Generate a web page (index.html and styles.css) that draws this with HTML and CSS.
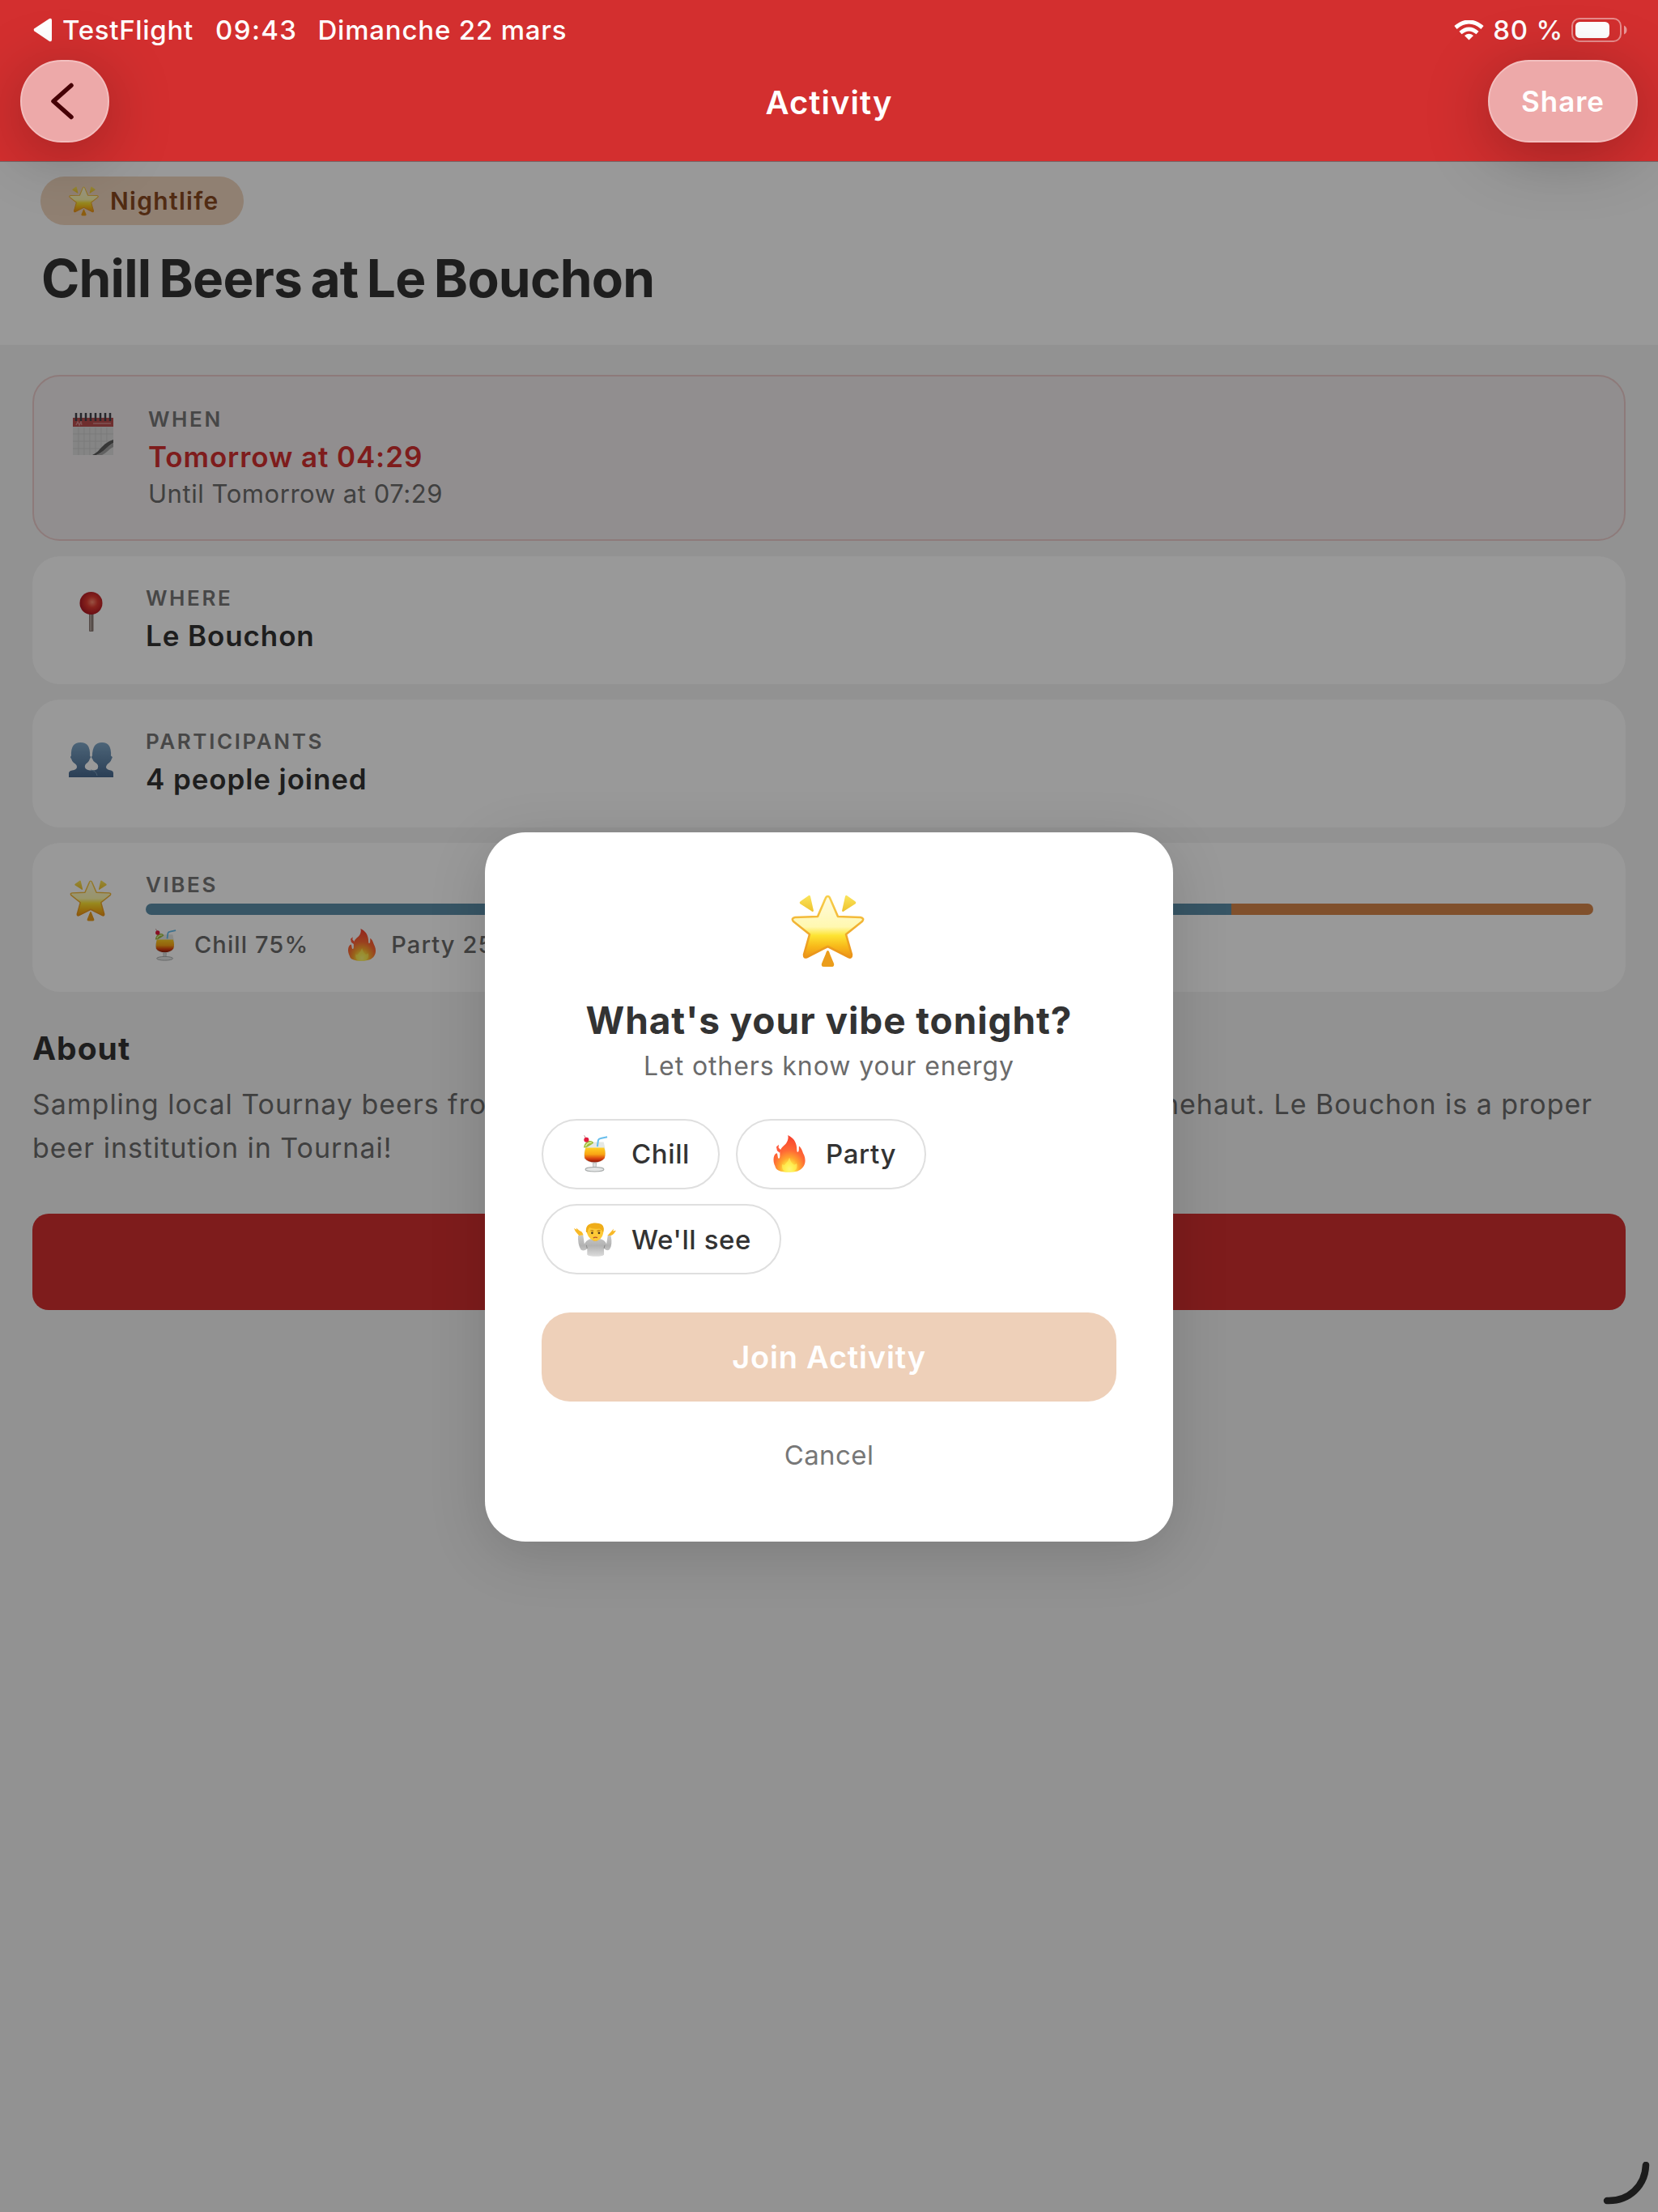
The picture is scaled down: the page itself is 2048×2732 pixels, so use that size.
FILE: index.html
```html
<!DOCTYPE html>
<html lang="en">
<head>
    <meta charset="UTF-8">
    <meta name="viewport" content="width=device-width, initial-scale=1.0">
    <title>Activity</title>
    <link rel="stylesheet" href="styles.css">
</head>
<body>
    <!-- Shared icons -->
    <svg class="icon-defs" width="0" height="0">
        <defs>
            <linearGradient id="starFill" x1="0" y1="0" x2="0" y2="1">
                <stop offset="0" stop-color="#fffbe0"/>
                <stop offset="0.5" stop-color="#fff8b0"/>
                <stop offset="0.64" stop-color="#fde433"/>
                <stop offset="0.82" stop-color="#f8b91a"/>
                <stop offset="1" stop-color="#ec9217"/>
            </linearGradient>
            <linearGradient id="starEdge" x1="0" y1="0" x2="0" y2="1">
                <stop offset="0" stop-color="#f8cf4c"/>
                <stop offset="1" stop-color="#ea9318"/>
            </linearGradient>
            <linearGradient id="rayFill" x1="0" y1="0" x2="0" y2="1">
                <stop offset="0" stop-color="#fbe55c"/>
                <stop offset="1" stop-color="#eec22e"/>
            </linearGradient>
            <radialGradient id="fireFill" cx="0.5" cy="0.92" r="0.85">
                <stop offset="0" stop-color="#fffb9a"/>
                <stop offset="0.17" stop-color="#ffe840"/>
                <stop offset="0.37" stop-color="#ffa42e"/>
                <stop offset="0.6" stop-color="#ff6a35"/>
                <stop offset="1" stop-color="#f8452f"/>
            </radialGradient>
            <linearGradient id="drinkFill" x1="0" y1="0" x2="0" y2="1">
                <stop offset="0" stop-color="#ffcf24"/>
                <stop offset="0.45" stop-color="#f9a514"/>
                <stop offset="0.75" stop-color="#d9420f"/>
                <stop offset="1" stop-color="#8c1708"/>
            </linearGradient>
            <linearGradient id="shirtFill" x1="0" y1="0" x2="0" y2="1">
                <stop offset="0" stop-color="#c9c9c9"/>
                <stop offset="0.5" stop-color="#b2b2b2"/>
                <stop offset="1" stop-color="#dcdcdc"/>
            </linearGradient>
            <linearGradient id="peopleFill" x1="0" y1="0" x2="0" y2="1">
                <stop offset="0" stop-color="#7fa7c8"/>
                <stop offset="1" stop-color="#48698f"/>
            </linearGradient>
            <radialGradient id="pinFill" cx="0.55" cy="0.45" r="0.6">
                <stop offset="0" stop-color="#ff8a70"/>
                <stop offset="0.4" stop-color="#e03a30"/>
                <stop offset="1" stop-color="#a81220"/>
            </radialGradient>
        </defs>
        <symbol id="star" viewBox="0 0 91 90">
            <path d="M24 2L28 20Q27 22 25 20L11 11Q10 9 12 8L22 1Q23 0 24 2Z" fill="url(#rayFill)"/>
            <path d="M67 2L63 20Q64 22 66 20L80 11Q81 9 79 8L69 1Q68 0 67 2Z" fill="url(#rayFill)"/>
            <path d="M45.5 2Q47.500 2 48.500 5L58 27L86 28Q91 29 88 33L68 49L75 74Q75 79 71 77L45.500 64L20 77Q16 79 16 74L23 49L3 33Q0 29 5 28L33 27L42.500 5Q43.500 2 45.500 2Z" fill="url(#starFill)" stroke="url(#starEdge)" stroke-width="2.600" stroke-linejoin="round"/>
            <path d="M45.500 69Q47 69 48 73L53 85Q54 89 50 89H41Q37 89 38 85L43 73Q44 69 45.500 69Z" fill="#eb9d1b"/>
        </symbol>
        <symbol id="fire" viewBox="0 0 117 136">
            <path d="M53 0C76 10 86 30 86 53C86 64 91 64 93 56C94 48 93 43 94 40C106 50 106 62 112 72C122 95 115 120 91 130C80 136 38 138 20 129C8 125 9 117 4 108C-3 88 2 70 12 66C16 66 15 77 18 84C25 88 24 78 24 69C24 47 34 43 46 31C54 20 56 9 53 0Z" fill="url(#fireFill)"/>
            <path d="M11 43L20 35L19 46L27 54L24 65L14 57Z" fill="#ff5a3c"/>
            <path d="M58 136C36 136 29 121 33 106Q40 113 45 104Q55 95 59 82Q64 100 72 106Q79 111 85 103C90 119 83 136 58 136Z" fill="#fff35e" opacity="0.6"/>
        </symbol>
        <symbol id="cocktail" viewBox="0 0 93 136">
            <path d="M19 25H78C83 46 87 63 82 83C75 97 59 101 45 101C28 101 14 96 7 84C2 63 14 46 19 25Z" fill="#e5e8e4"/>
            <path d="M12 46H80C85 61 85 73 81 84C73 94 60 99 45 99C29 99 16 94 9 84C6 70 9 57 12 46Z" fill="url(#drinkFill)"/>
            <path d="M55 42L58 19Q60 13 67 12L91 7" fill="none" stroke="#66bdec" stroke-width="6"/>
            <path d="M5 46Q7 26 24 21Q38 19 41 29Q31 37 15 45Z" fill="#9dbd3b"/>
            <path d="M12 41Q17 27 34 27" fill="none" stroke="#e5eeaa" stroke-width="4"/>
            <path d="M7 1L14 13" stroke="#9c4a44" stroke-width="2"/>
            <circle cx="15" cy="17" r="9" fill="#e31c3d"/>
            <path d="M39 101H51L50 119H40Z" fill="#dddfdf" stroke="#9fa3a3" stroke-width="2"/>
            <ellipse cx="45" cy="125" rx="34" ry="8" fill="#e4e6e6" stroke="#a4a8a8" stroke-width="3"/>
        </symbol>
        <symbol id="shrug" viewBox="0 0 153 122">
            <path d="M15 46L33 45L38 77Q43 65 58 59H97Q113 63 118 77L123 45L134 46Q141 82 129 97Q120 104 109 93V116Q103 122 80 122Q55 122 48 116V94Q37 105 25 98Q13 77 15 46Z" fill="url(#shirtFill)"/>
            <path d="M48 93L45 81M109 93L112 81" stroke="#8b8b8b" stroke-width="3"/>
            <path d="M18 46L5 31L0 20L10 25L8 18L20 29Q31 32 34 45Z" fill="#f8b928"/>
            <path d="M122 46L136 31L144 21L142 30L153 28L146 38Q141 44 134 46Z" fill="#f8b928"/>
            <path d="M65 51H90V60Q78 73 65 60Z" fill="#e59d17"/>
            <path d="M46 20Q46 2 77 2Q107 2 107 22Q108 48 96 58Q78 74 60 58Q45 46 46 20Z" fill="#fdc937"/>
            <path d="M44 34Q40 4 72 1Q106-1 108 19Q109 28 106 35Q101 24 93 21Q69 25 56 17Q50 24 49 36Z" fill="#efad1a"/>
            <path d="M60 29Q66 26 71 30M84 30Q91 26 96 29" stroke="#a2680f" stroke-width="3" fill="none"/>
            <circle cx="66" cy="37" r="4" fill="#49351c"/>
            <circle cx="91" cy="37" r="4" fill="#49351c"/>
            <path d="M70 55Q77 51 85 54" stroke="#b7502b" stroke-width="4" fill="none"/>
        </symbol>
    </svg>

    <header class="header">
        <div class="status-bar">
            <div class="status-left">
                <svg width="24" height="32" viewBox="0 0 24 32"><path d="M1 14.500Q0 16 1.500 17.500L20 30Q23 31 23 28V4Q23 1 20 2Z" fill="#fff"/></svg>
                <span class="status-app">TestFlight</span>
                <span class="status-time">09:43</span>
                <span class="status-date">Dimanche 22 mars</span>
            </div>
            <div class="status-right">
                <svg width="37" height="25" viewBox="0 0 37 25">
                    <path d="M2 9Q18.500-5 35 9" fill="none" stroke="#fff" stroke-width="5"/>
                    <path d="M8 15.500Q18.500 6.500 29 15.500" fill="none" stroke="#fff" stroke-width="4.800"/>
                    <path d="M13 19Q18.500 14.500 24 19L18.500 24.500Z" fill="#fff"/>
                </svg>
                <span class="battery-text">80 %</span>
                <svg width="69" height="30" viewBox="0 0 69 30">
                    <rect x="1" y="1" width="60" height="28" rx="9" fill="none" stroke="#fff" stroke-opacity="0.45" stroke-width="2"/>
                    <rect x="5" y="5" width="42" height="20" rx="5.500" fill="#fff"/>
                    <path d="M65 9.500Q68.500 11 68.500 15Q68.500 19 65 20.500Z" fill="#fff" fill-opacity="0.5"/>
                </svg>
            </div>
        </div>
        <div class="nav-bar">
            <button class="glass-button back-button" aria-label="Back">
                <svg width="30" height="46" viewBox="0 0 30 46"><path d="M26 3.500L4 23L26 42.500" fill="none" stroke="#450005" stroke-width="5.500" stroke-linecap="round" stroke-linejoin="round"/></svg>
            </button>
            <div class="nav-title">Activity</div>
            <button class="glass-button share-button">Share</button>
        </div>
    </header>

    <main class="page">
        <section class="hero">
            <div class="category">
                <svg width="37" height="37"><use href="#star"/></svg>
                <span>Nightlife</span>
            </div>
            <h1 class="title">Chill Beers at Le Bouchon</h1>
        </section>

        <section class="details">
            <div class="card card-when">
                <svg class="card-icon" viewBox="0 0 68 68">
                    <path d="M7 14H57V60H7Z" fill="#dedede"/>
                    <path d="M14 26V60M21 26V60M28 26V60M35 26V60M42 26V60M49 26V60M7 34H57M7 43H57M7 52H57" stroke="#cbcbcb" stroke-width="1"/>
                    <path d="M7 14H57V25H7Z" fill="#b94d4d"/>
                    <path d="M11 23L13 19L15 23L17 19L18 23M32 21H54" stroke="#d58c8c" stroke-width="1.500" fill="none"/>
                    <path d="M11 8V18M17 8V18M23 8V18M29 8V18M35 8V18M41 8V18M47 8V18M53 8V18" stroke="#43434b" stroke-width="2.500"/>
                    <path d="M34 58C44 54 45 46 57 42V60H31Z" fill="#dedede"/>
                    <path d="M31 60C42 55 42 46 57 41V45C49 49 47 56 36 60Z" fill="#5c5c5c"/>
                    <path d="M36 60C44 57 49 50 57 45V50C51 53 48 58 43 60Z" fill="#a2a2a2"/>
                </svg>
                <div class="card-body">
                    <div class="card-label">WHEN</div>
                    <div class="card-value value-when">Tomorrow at 04:29</div>
                    <div class="card-sub">Until Tomorrow at 07:29</div>
                </div>
            </div>

            <div class="card">
                <svg class="card-icon" viewBox="0 0 68 68">
                    <rect x="30" y="30" width="5.500" height="27" rx="1" fill="#8d7d77"/>
                    <path d="M32 30V56" stroke="#bcaea6" stroke-width="1.500"/>
                    <circle cx="32.500" cy="22" r="14" fill="url(#pinFill)"/>
                </svg>
                <div class="card-body">
                    <div class="card-label">WHERE</div>
                    <div class="card-value">Le Bouchon</div>
                </div>
            </div>

            <div class="card">
                <svg class="card-icon" viewBox="0 0 68 68">
                    <path d="M5 60V54Q5 51 9 50Q15 49 15 45Q15 42 11 39Q9 37 8 33Q6 31 8 29Q7 10 19.500 10Q32 10 31 29Q33 31 31 33Q30 37 28 39Q24 42 25 46Q26 49 31 50H34Q41 50 41 46Q42 42 38 39Q35 37 34 33Q32 31 34 29Q34 10 46 10Q58 10 57 29Q60 31 58 33Q57 37 55 39Q51 42 51 46Q52 49 57 50Q60 51 60 54V60Z" fill="url(#peopleFill)" transform="translate(0 8.500) scale(1 0.86)"/>
                    <path d="M32 51Q39 52 40 58" fill="none" stroke="#7ea0bf" stroke-width="1"/>
                </svg>
                <div class="card-body">
                    <div class="card-label">PARTICIPANTS</div>
                    <div class="card-value">4 people joined</div>
                </div>
            </div>

            <div class="card">
                <svg class="card-icon" viewBox="0 0 68 68">
                    <use href="#star" x="6" y="10" width="52" height="51"/>
                </svg>
                <div class="card-body">
                    <div class="card-label label-vibes">VIBES</div>
                    <div class="vibe-bar">
                        <div class="vibe-chill" style="width: 75%"></div>
                        <div class="vibe-party" style="width: 25%"></div>
                    </div>
                    <div class="vibe-legend">
                        <div class="legend-item">
                            <svg width="48" height="40"><use href="#cocktail"/></svg>
                            <span>Chill 75%</span>
                        </div>
                        <div class="legend-item">
                            <svg width="48" height="40"><use href="#fire"/></svg>
                            <span>Party 25%</span>
                        </div>
                    </div>
                </div>
            </div>
        </section>

        <section class="about">
            <h2 class="about-title">About</h2>
            <div class="about-text">
                <div class="about-line">
                    <span>Sampling local Tournay beers from Cazeau</span>
                    <span>and Brunehaut. Le Bouchon is a proper</span>
                </div>
                <div>beer institution in Tournai!</div>
            </div>
            <button class="page-button" aria-label="Join"></button>
        </section>
    </main>

    <div class="overlay">
        <div class="modal">
            <svg class="modal-icon" width="91" height="90"><use href="#star"/></svg>
            <h2 class="modal-title">What's your vibe tonight?</h2>
            <div class="modal-subtitle">Let others know your energy</div>
            <div class="chips">
                <button class="chip"><svg width="52" height="46"><use href="#cocktail"/></svg><span>Chill</span></button>
                <button class="chip"><svg width="52" height="46"><use href="#fire"/></svg><span>Party</span></button>
                <button class="chip"><svg width="52" height="42"><use href="#shrug"/></svg><span>We'll see</span></button>
            </div>
            <button class="join-button">Join Activity</button>
            <button class="cancel-button">Cancel</button>
        </div>
    </div>

    <svg class="corner" width="60" height="56" viewBox="0 0 60 56"><path d="M5 48C32 49 52 30 53 4" fill="none" stroke="#1c1c1c" stroke-width="8.500" stroke-linecap="round"/></svg>
</body>
</html>
```

FILE: styles.css
```css
* {
    box-sizing: border-box;
}

body, html {
    margin: 0;
    padding: 0;
    height: 100%;
    width: 100%;
    font-family: Inter, "Liberation Sans", sans-serif;
    background-color: #f4f4f4;
    overflow: hidden;
}

button {
    border: none;
    padding: 0;
    font-family: inherit;
    cursor: pointer;
}

.icon-defs {
    position: absolute;
}

/* Header */
.header {
    position: relative;
    z-index: 2;
    height: 199px;
    background-color: #d32f2f;
    color: white;
    box-shadow: 0 1px 0 #75696a;
}

.status-bar {
    display: flex;
    justify-content: space-between;
    height: 74px;
    padding: 0 38px 0 41px;
    font-size: 33px;
    font-weight: 500;
    line-height: 74px;
    white-space: nowrap;
}

.status-left, .status-right {
    display: flex;
    align-items: center;
}

.status-app {
    margin-left: 12px;
    letter-spacing: 0.7px;
}

.status-time {
    margin-left: 27px;
    letter-spacing: 1.4px;
}

.status-date {
    margin-left: 25px;
    letter-spacing: 0.8px;
}

.battery-text {
    margin: 0 10px 0 11px;
    letter-spacing: 0.8px;
}

.nav-bar {
    display: grid;
    grid-template-columns: 1fr auto 1fr;
    align-items: center;
    height: 102px;
    padding: 0 25px;
}

.glass-button {
    height: 102px;
    border-radius: 51px;
    background-color: #eda9a9;
    border: 2px solid #f3bfbf;
    box-shadow: 0 14px 80px rgba(0, 0, 0, 0.27);
}

.back-button {
    display: flex;
    align-items: center;
    justify-content: center;
    width: 110px;
    padding-right: 6px;
}

.share-button {
    justify-self: end;
    width: 185px;
    font-size: 35px;
    font-weight: 600;
    letter-spacing: 1px;
    color: white;
}

.nav-title {
    font-size: 40px;
    font-weight: 600;
    letter-spacing: 1px;
    padding-top: 3px;
}

/* Title block */
.hero {
    display: flex;
    flex-direction: column;
    align-items: flex-start;
    height: 227px;
    padding: 19px 50px 0;
    background-color: #ffffff;
}

.category {
    display: flex;
    align-items: center;
    gap: 14px;
    height: 60px;
    padding: 0 30px 0 35px;
    border-radius: 30px;
    background-color: #f0d5be;
    color: #87481f;
    font-size: 30px;
    font-weight: 600;
    line-height: 58px;
    letter-spacing: 1.3px;
}

.title {
    margin: 28px 0 0;
    padding-left: 1px;
    font-size: 64px;
    font-weight: 700;
    line-height: 76px;
    letter-spacing: -0.8px;
    word-spacing: -4px;
    color: #333;
}

/* Detail cards */
.details {
    display: flex;
    flex-direction: column;
    gap: 19px;
    padding: 37px 40px 0;
}

.card {
    display: flex;
    gap: 32px;
    padding: 36px 40px 39px;
    border-radius: 34px;
    background-color: #ffffff;
}

.card-when {
    padding: 37px 41px 40px;
    background-color: #f2edee;
    border: 2px solid #eccccb;
}

.card-icon {
    flex: none;
    width: 68px;
    height: 68px;
}

.card-body {
    flex-grow: 1;
}

.card-label {
    margin-bottom: 11px;
    font-size: 26px;
    font-weight: 600;
    line-height: 31px;
    letter-spacing: 2.6px;
    color: #777;
}

.card-value {
    font-size: 35px;
    font-weight: 600;
    line-height: 41px;
    letter-spacing: 0.9px;
    color: #333;
}

.value-when {
    color: #d32f2f;
}

.card-sub {
    margin-top: 9px;
    font-size: 31px;
    line-height: 32px;
    letter-spacing: 0.55px;
    color: #6b6b6b;
}

.label-vibes {
    margin-bottom: 8px;
}

.vibe-bar {
    display: flex;
    height: 14px;
    border-radius: 7px;
    overflow: hidden;
}

.vibe-chill {
    background-color: #5c8ea8;
}

.vibe-party {
    background-color: #d5854a;
}

.vibe-legend {
    display: flex;
    gap: 42px;
    height: 39px;
    margin-top: 17px;
    font-size: 29px;
    font-weight: 500;
    line-height: 39px;
    letter-spacing: 1.1px;
    color: #6b6b6b;
}

.legend-item {
    display: flex;
    gap: 12px;
}

/* About */
.about {
    padding: 47px 40px 0;
}

.about-title {
    margin: 0;
    font-size: 39px;
    font-weight: 700;
    line-height: 46px;
    letter-spacing: 1px;
    color: #333;
}

.about-text {
    margin-top: 19px;
    font-size: 34px;
    line-height: 53.5px;
    letter-spacing: 0.97px;
    color: #6b6b6b;
}

.about-line {
    display: flex;
    justify-content: space-between;
    width: 1927px;
}

.page-button {
    display: block;
    width: 100%;
    height: 119px;
    margin-top: 55px;
    border-radius: 20px;
    background-color: #d32f2f;
}

/* Vibe modal */
.overlay {
    position: absolute;
    top: 199px;
    left: 0;
    right: 0;
    bottom: 0;
    z-index: 1;
    display: flex;
    align-items: center;
    justify-content: center;
    background-color: rgba(0, 0, 0, 0.4);
}

.modal {
    display: flex;
    flex-direction: column;
    align-items: center;
    width: 850px;
    height: 876px;
    padding: 77px 70px 0;
    border-radius: 50px;
    background-color: #ffffff;
    box-shadow: 0 16px 70px rgba(0, 0, 0, 0.15);
}

.modal-icon {
    flex: none;
    margin-right: 3px;
}

.modal-title {
    margin: 38px 0 0;
    font-size: 46px;
    font-weight: 700;
    line-height: 54px;
    letter-spacing: 0.9px;
    color: #333;
}

.modal-subtitle {
    margin-top: 11px;
    font-size: 32px;
    line-height: 38px;
    letter-spacing: 0.9px;
    color: #6b6b6b;
}

.chips {
    display: flex;
    flex-wrap: wrap;
    gap: 18.5px 20px;
    width: 100%;
    margin-top: 46px;
}

.chip {
    display: flex;
    align-items: center;
    gap: 19px;
    height: 87px;
    padding: 0 35px 0 38px;
    border: 2px solid #dfdfdf;
    border-radius: 44px;
    background-color: #ffffff;
    color: #333;
    font-size: 33px;
    font-weight: 500;
    letter-spacing: 0.6px;
}

.join-button {
    flex: none;
    width: 100%;
    height: 110px;
    margin-top: 46.5px;
    border-radius: 35px;
    background-color: #eed0b9;
    color: white;
    font-size: 38px;
    font-weight: 600;
    letter-spacing: 0.8px;
}

.cancel-button {
    margin-top: 46px;
    background: none;
    color: #777;
    font-size: 33px;
    line-height: 40px;
    letter-spacing: 0.4px;
}

/* Corner handle */
.corner {
    position: absolute;
    right: 8px;
    bottom: 6px;
    z-index: 3;
}
```
